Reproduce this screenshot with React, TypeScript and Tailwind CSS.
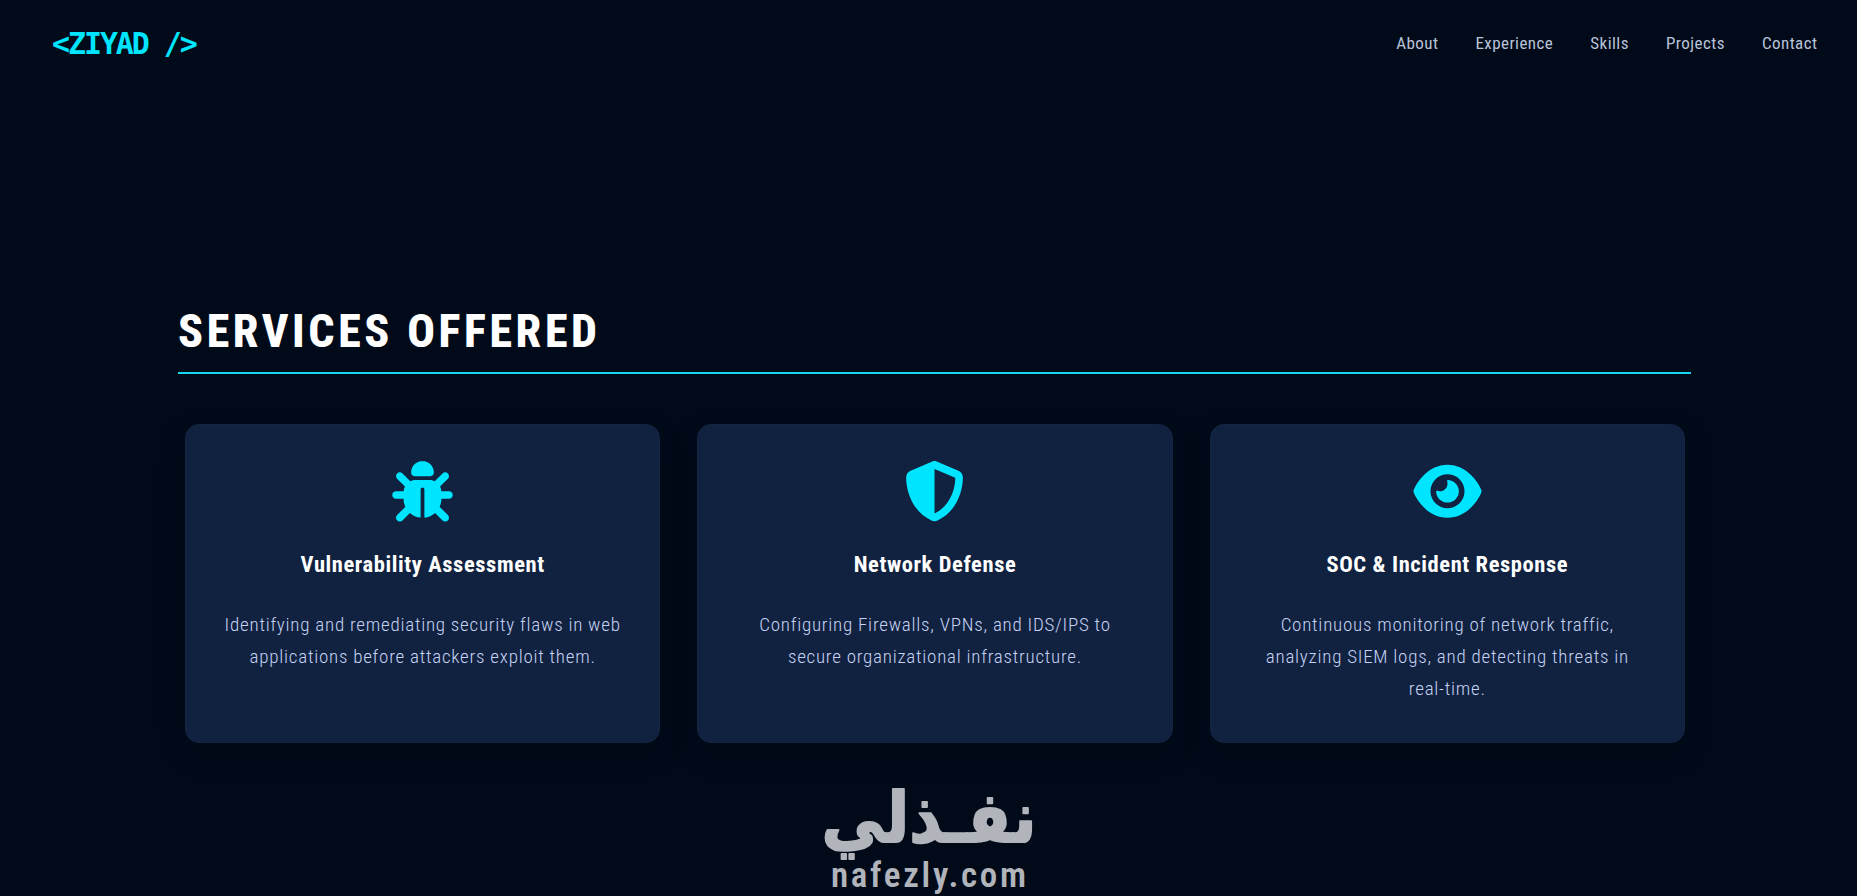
import type { ComponentType } from "react"
import { FaBug, FaEye, FaShieldHalved } from "react-icons/fa6"

interface ServiceCardProps {
  icon: ComponentType<{ className?: string }>
  title: string
  lines: string[]
}

const navLinks = ["About", "Experience", "Skills", "Projects", "Contact"]

const services: ServiceCardProps[] = [
  {
    icon: FaBug,
    title: "Vulnerability Assessment",
    lines: ["Identifying and remediating security flaws in web", "applications before attackers exploit them."],
  },
  {
    icon: FaShieldHalved,
    title: "Network Defense",
    lines: ["Configuring Firewalls, VPNs, and IDS/IPS to", "secure organizational infrastructure."],
  },
  {
    icon: FaEye,
    title: "SOC & Incident Response",
    lines: ["Continuous monitoring of network traffic,", "analyzing SIEM logs, and detecting threats in", "real-time."],
  },
]

function Header() {
  return (
    <header className="flex h-[88px] items-center justify-between pr-[39.5px] pl-[52px]">
      <a
        href="#"
        className="pb-0.5 font-['DejaVu_Sans_Mono',monospace] text-[30px] font-bold tracking-[-2.1px] text-[#00e5ff]"
      >
        {"<ZIYAD />"}
      </a>
      <nav className="flex gap-[37px]">
        {navLinks.map((link) => (
          <a key={link} href={`#${link.toLowerCase()}`} className="text-[17px] tracking-[0.45px] text-[#b9c3d9]">
            {link}
          </a>
        ))}
      </nav>
    </header>
  )
}

function ServiceCard({ icon: Icon, title, lines }: ServiceCardProps) {
  return (
    <div className="flex h-[319px] flex-col items-center rounded-[14px] border border-[#142542] bg-[#112240] pt-9 text-center shadow-[0_10px_30px_rgba(0,0,0,0.1)]">
      <Icon className="h-[60.5px] w-[69px] text-[#00e5ff]" />
      <h3 className="mt-[26.5px] text-[22.5px] leading-8 font-bold tracking-[0.6px] text-white">{title}</h3>
      <p className="mt-[29px] text-[19px] leading-8 font-light tracking-[0.75px] text-[#c6d2f4]">
        {lines.map((line) => (
          <span key={line} className="block whitespace-nowrap">
            {line}
          </span>
        ))}
      </p>
    </div>
  )
}

function Watermark() {
  return (
    <div className="mt-[38px] ml-[815px] w-[228px] text-[#b1b4bb]">
      <svg viewBox="0 0 228 82" className="block h-[82px] w-[228px] overflow-visible" fill="currentColor">
        <text
          x="114"
          y="61"
          textAnchor="middle"
          direction="rtl"
          fontFamily="DejaVu Sans, sans-serif"
          fontSize="70"
          fontWeight="700"
          stroke="currentColor"
          strokeWidth="2"
          strokeLinejoin="round"
          textLength="215"
          lengthAdjust="spacingAndGlyphs"
        >
          نفـذلي
        </text>
      </svg>
      <div className="-mt-[6px] pl-4 text-[35px] leading-[38px] font-semibold tracking-[2.7px]">nafezly.com</div>
    </div>
  )
}

export default function App() {
  return (
    <div className="h-screen overflow-hidden bg-[#010a18] font-['Roboto_Condensed','Roboto',sans-serif]">
      <Header />
      <main>
        <section className="mt-[210px] ml-[178px] w-[1513px]">
          <h2 className="border-b-2 border-[#14d4ee] pb-2 text-[46px] leading-[66px] font-extrabold tracking-[3.6px] text-white uppercase">
            Services Offered
          </h2>
          <div className="mt-[50px] grid grid-cols-3 gap-[37px] pr-1.5 pl-[7px]">
            {services.map((service) => (
              <ServiceCard key={service.title} {...service} />
            ))}
          </div>
        </section>
        <Watermark />
      </main>
    </div>
  )
}
